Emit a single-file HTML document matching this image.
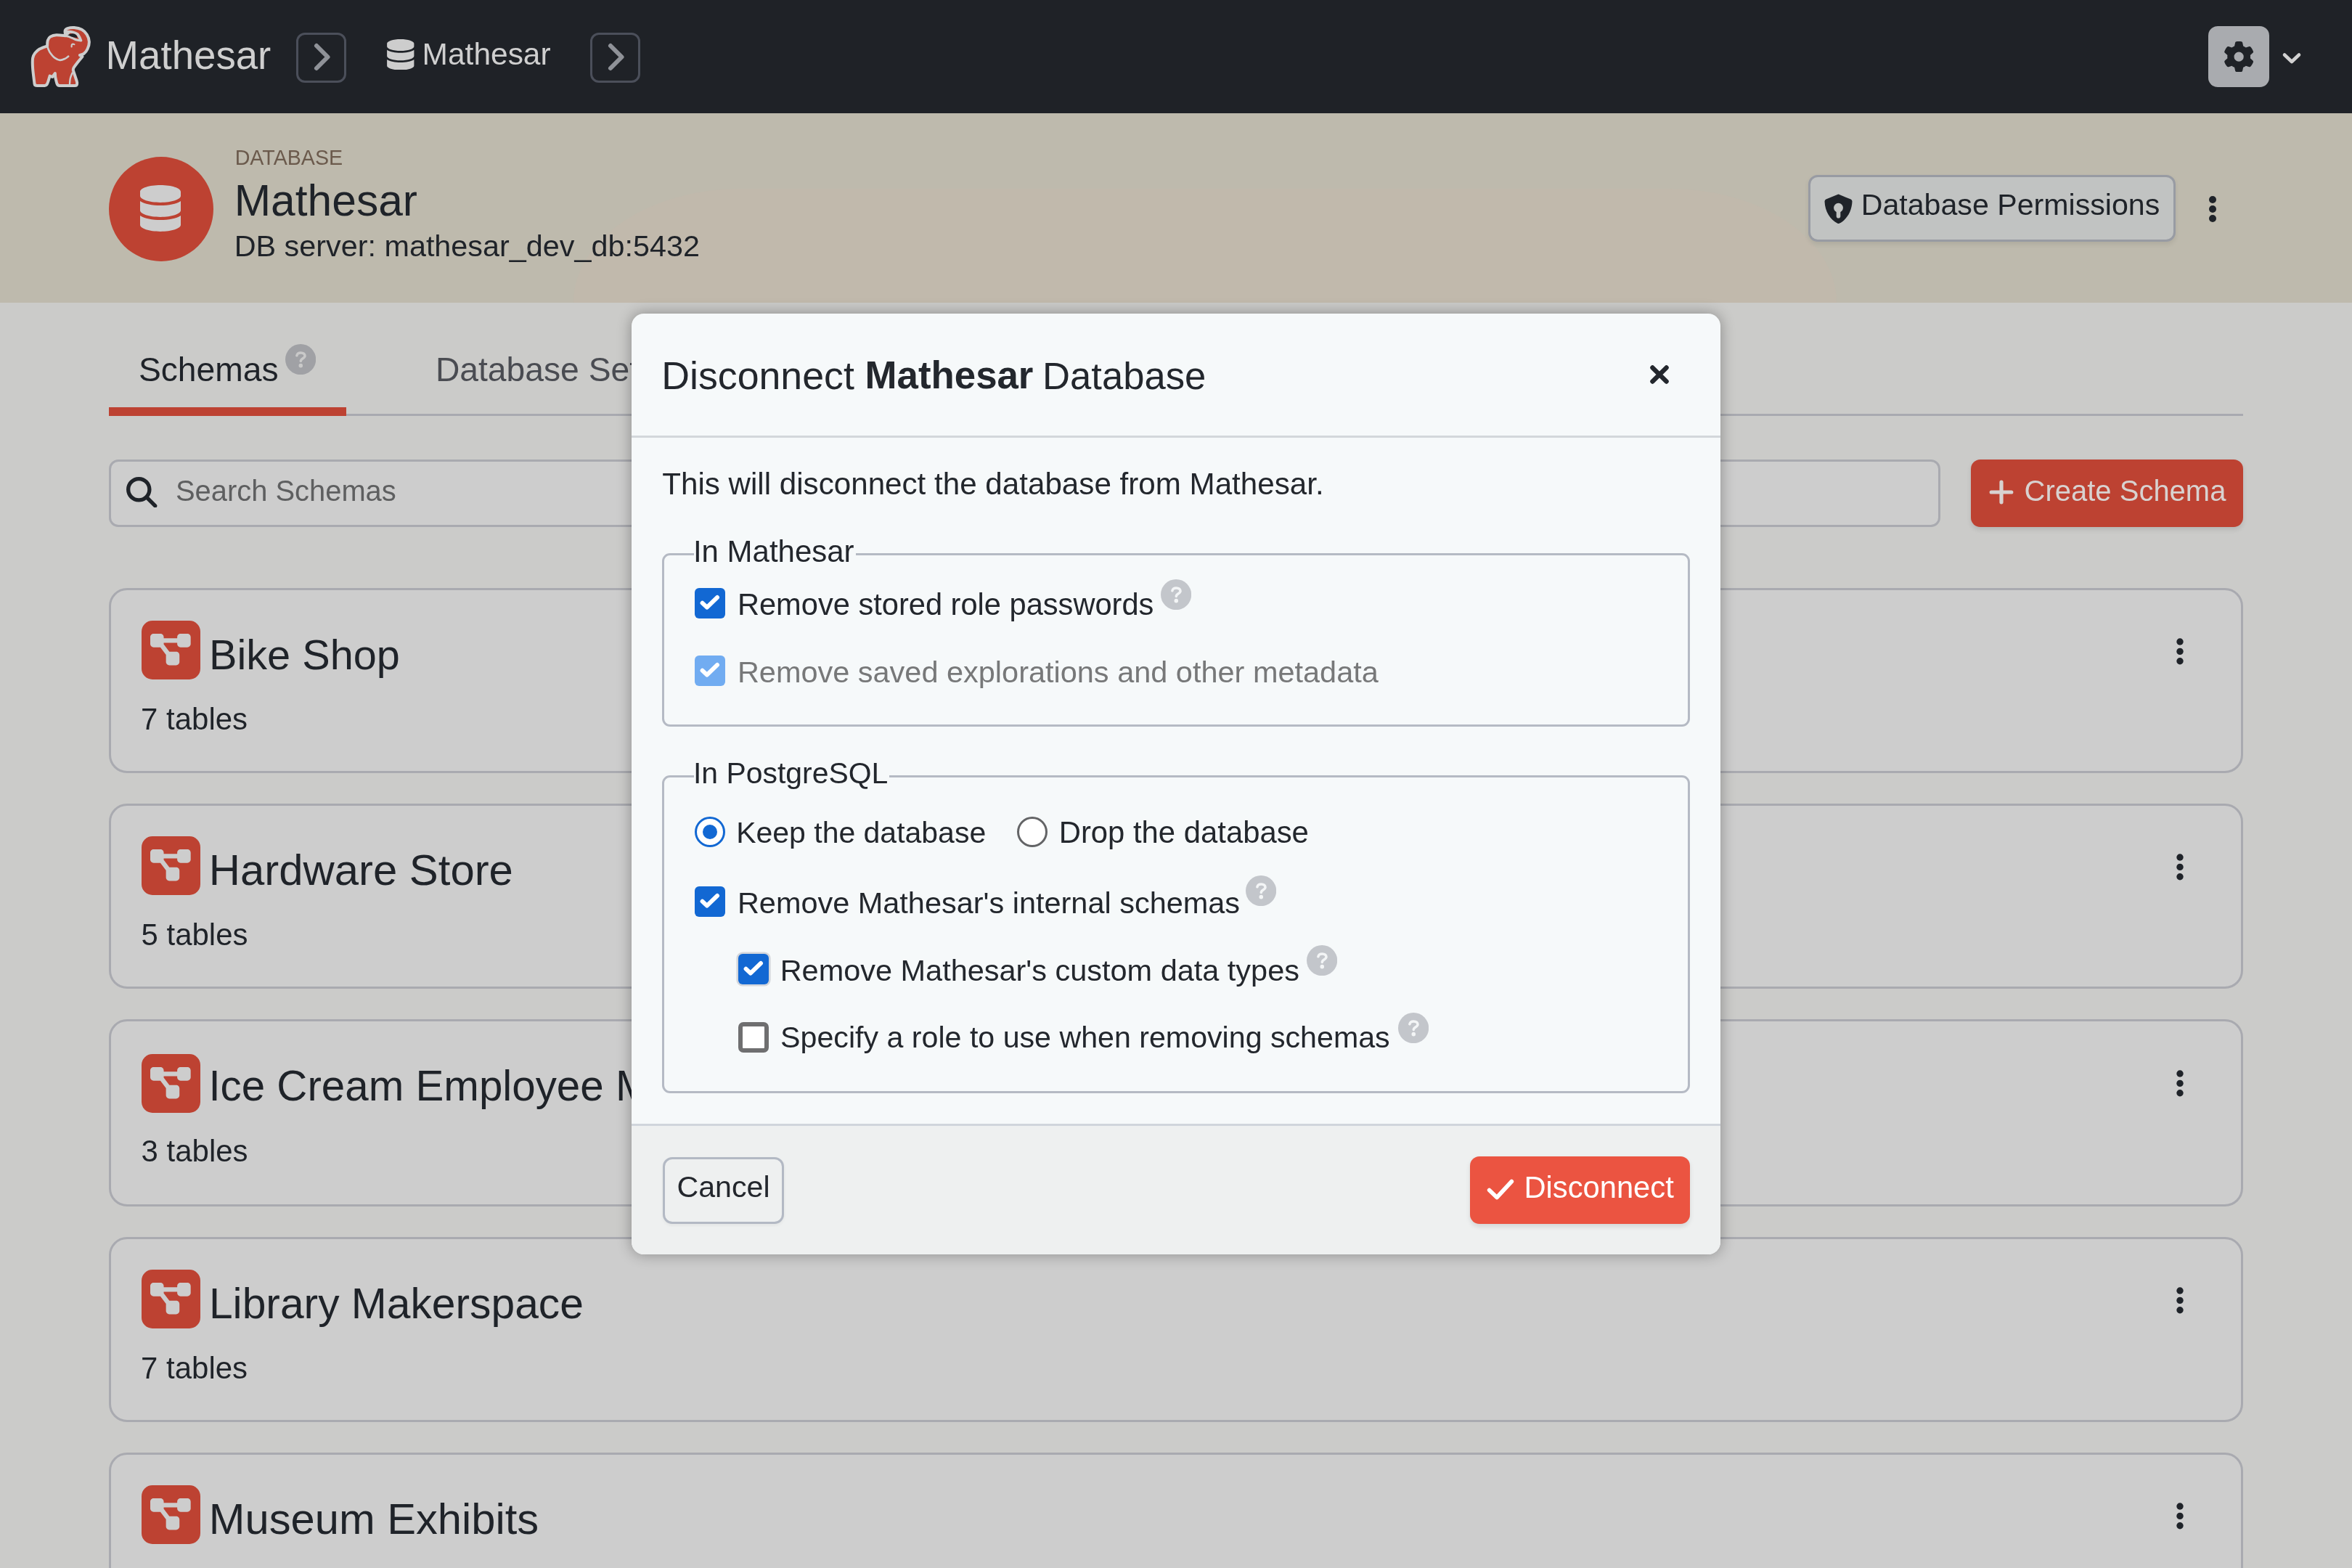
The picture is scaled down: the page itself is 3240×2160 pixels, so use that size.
<!DOCTYPE html>
<html><head><meta charset="utf-8"><title>Mathesar</title>
<style>
html,body{margin:0;padding:0;}
body{width:100vw;height:66.66667vw;overflow:hidden;position:relative;background:#cbcbc9;font-family:"Liberation Sans",sans-serif;}
.b{position:absolute;box-sizing:border-box;display:block;}
.t{position:absolute;white-space:pre;line-height:1;}
#root{position:absolute;left:0;top:0;width:100vw;height:66.66667vw;overflow:hidden;will-change:transform;transform:translateZ(0);}
</style></head><body><div id="root">
<div class="b" style="left:0;top:0;width:100vw;height:4.81482vw;background:#1f2227;"></div>
<svg class="b" style="left:0.92593vw;top:0.74075vw;width:3.70371vw;height:3.39507vw;" viewBox="30 24 120 110"><path d="M47.5 115.2C47.1 111.7 45.5 99.9 45.1 94.1C44.7 88.2 44.6 83.6 45.1 80.1C45.6 76.6 46.6 75.2 48.2 73.1C49.8 71.0 51.7 69.1 54.5 67.5C57.3 65.9 63.3 64.0 65.1 63.3C65.2 62.0 65.1 57.7 65.8 55.6C66.5 53.5 67.3 51.8 69.3 50.6C71.3 49.4 74.2 48.4 77.7 48.2C81.2 48.0 88.2 49.0 90.3 49.2C90.2 48.0 89.1 43.9 89.6 42.2C90.1 40.5 91.0 39.8 93.1 39.1C95.2 38.4 98.9 37.7 102.2 38.0C105.5 38.3 109.8 39.2 112.7 40.8C115.6 42.4 118.1 45.0 119.8 47.8C121.5 50.6 122.8 54.4 122.9 57.7C123.0 61.0 121.7 64.8 120.5 67.5C119.3 70.2 117.4 72.4 115.6 73.8C113.8 75.2 110.9 75.6 109.9 75.9L113.5 78.0C112.4 79.3 109.1 83.1 107.1 85.7C105.1 88.3 102.5 91.5 101.5 93.4C100.5 95.3 100.9 96.3 100.8 96.9C101.6 99.4 104.8 108.7 105.7 111.7C106.6 114.8 106.0 114.6 106.1 115.2Q106.39999999999999 118.19999999999999 102.8 118.0L82.0 118.0Q79.3 118.0 78.4 115.2C78.1 113.8 76.7 109.1 76.3 106.7C75.9 104.3 76.0 102.0 75.9 101.1L72.1 106.0L68.6 104.6C68.2 105.8 67.2 109.7 66.5 111.7C65.8 113.7 65.2 115.5 64.4 116.6C63.6 117.6 62.1 117.8 61.6 118.0L51.3 118.0Q47.8 118.0 47.5 115.2Z" fill="#bd4232" stroke="#cdcdcd" stroke-width="4" stroke-linejoin="round"/><path d="M90.3 49.2C91.2 49.5 94.4 50.1 96.0 50.7C97.6 51.3 98.5 51.9 100.1 52.6C101.7 53.3 103.8 54.5 105.7 55.0C107.7 55.5 110.8 55.8 111.8 55.9" fill="none" stroke="#cdcdcd" stroke-width="3.2" stroke-linecap="round"/><path d="M92.1 43.6C93.4 43.7 97.7 43.8 100.1 44.3C102.5 44.8 104.9 45.8 106.4 46.9C107.9 48.0 108.2 49.4 109.0 50.6C109.8 51.9 110.6 53.8 110.9 54.4" fill="none" stroke="#cdcdcd" stroke-width="3.8" stroke-linecap="round"/><path d="M90.3 49.2 L91.2 43.4 L97.5 44.2 L95 47.3 L97.5 51.2 Z" fill="#cdcdcd"/><path d="M93.1 48.2C94.3 47.9 98.1 46.3 100.1 46.3C102.1 46.3 103.9 47.2 105.0 48.2C106.1 49.2 106.5 51.5 106.8 52.1C105.7 51.9 102.4 51.6 100.1 51.0C97.8 50.4 94.3 48.7 93.1 48.2Z" fill="#1f2227"/><g fill="none" stroke="#cdcdcd" stroke-width="2.6" stroke-linecap="round"><path d="M65.1 63.3C65.3 64.0 65.8 65.9 66.5 67.5C67.2 69.1 67.9 71.1 69.3 73.1C70.7 75.1 72.7 77.8 74.9 79.4C77.1 81.0 80.1 82.7 82.6 82.9C85.0 83.1 87.7 81.7 89.6 80.8C91.5 79.9 93.4 78.1 94.2 77.6"/><path d="M98.6 64.5C98.6 64.0 98.6 62.1 98.9 61.5C99.2 60.9 99.8 60.6 100.4 60.6C101.0 60.6 102.1 61.1 102.4 61.2" stroke-width="2.2"/><path d="M99.6 100.5C99.1 101.8 97.4 105.5 96.8 108.0C96.2 110.5 96.1 114.2 96.0 115.5" stroke-width="2.4"/></g></svg>
<div class="t" style="left:4.49383vw;top:1.5463vw;font-size:1.68612vw;color:#cfcfcf;">Mathesar</div>
<div class="b" style="left:12.5926vw;top:1.38889vw;width:2.12963vw;height:2.12963vw;border:0.0926vw solid #4b4f5a;border-radius:0.37038vw;"></div>
<svg class="b" style="left:12.5926vw;top:1.38889vw;width:2.12963vw;height:2.12963vw;" viewBox="0 0 69 69"><path d="M28 18 L43.5 33.5 L28 49" fill="none" stroke="#8f9298" stroke-width="6" stroke-linecap="round" stroke-linejoin="round"/></svg>
<svg class="b" style="left:16.4568vw;top:1.6605vw;width:1.15741vw;height:1.31482vw;" viewBox="0 0 448 512"><path d="M448 73.143v45.714C448 159.143 347.667 192 224 192S0 159.143 0 118.857V73.143C0 32.857 100.333 0 224 0s224 32.857 224 73.143zM448 176v102.857C448 319.143 347.667 352 224 352S0 319.143 0 278.857V176c48.125 33.143 136.208 48.572 224 48.572S399.874 209.143 448 176zm0 160v102.857C448 479.143 347.667 512 224 512S0 479.143 0 438.857V336c48.125 33.143 136.208 48.572 224 48.572S399.874 369.143 448 336z" fill="#cdcdcd"/></svg>
<div class="t" style="left:17.95062vw;top:1.66667vw;font-size:1.31112vw;color:#cfcfcf;">Mathesar</div>
<div class="b" style="left:25.0926vw;top:1.38889vw;width:2.12963vw;height:2.12963vw;border:0.0926vw solid #4b4f5a;border-radius:0.37038vw;"></div>
<svg class="b" style="left:25.0926vw;top:1.38889vw;width:2.12963vw;height:2.12963vw;" viewBox="0 0 69 69"><path d="M28 18 L43.5 33.5 L28 49" fill="none" stroke="#8f9298" stroke-width="6" stroke-linecap="round" stroke-linejoin="round"/></svg>
<div class="b" style="left:93.88889vw;top:1.11112vw;width:2.5926vw;height:2.5926vw;background:#a9abaf;border-radius:0.40124vw;"></div>
<svg class="b" style="left:94.54013vw;top:1.75vw;width:1.30556vw;height:1.30556vw;" viewBox="0 0 512 512"><path d="M495.9 166.6c3.2 8.7 .5 18.4-6.4 24.6l-43.3 39.4c1.1 8.3 1.7 16.8 1.7 25.4s-.6 17.1-1.7 25.4l43.3 39.4c6.9 6.2 9.6 15.9 6.4 24.6c-4.4 11.9-9.7 23.3-15.8 34.3l-4.7 8.1c-6.6 11-14 21.400-22.1 31.200c-5.900 7.200-15.700 9.600-24.500 6.800l-55.700-17.700c-13.400 10.300-28.200 18.900-44 25.400l-12.500 57.100c-2 9.100-9 16.300-18.200 17.800c-13.800 2.300-28 3.500-42.500 3.500s-28.700-1.200-42.500-3.500c-9.200-1.500-16.200-8.700-18.200-17.800l-12.500-57.100c-15.800-6.500-30.600-15.100-44-25.400L83.100 425.900c-8.800 2.800-18.600 .3-24.500-6.800c-8.100-9.800-15.500-20.200-22.100-31.200l-4.700-8.100c-6.100-11-11.400-22.400-15.800-34.300c-3.200-8.700-.5-18.400 6.400-24.600l43.300-39.400C64.600 273.100 64 264.600 64 256s.6-17.100 1.700-25.400L22.400 191.200c-6.900-6.200-9.600-15.900-6.400-24.600c4.400-11.900 9.700-23.300 15.800-34.300l4.700-8.100c6.600-11 14-21.400 22.100-31.200c5.900-7.200 15.700-9.600 24.500-6.800l55.700 17.700c13.400-10.300 28.200-18.900 44-25.400l12.500-57.100c2-9.100 9-16.300 18.200-17.800C227.300 1.200 241.500 0 256 0s28.700 1.200 42.500 3.500c9.200 1.500 16.200 8.700 18.200 17.800l12.500 57.100c15.800 6.500 30.600 15.100 44 25.400l55.700-17.700c8.800-2.800 18.600-.3 24.500 6.800c8.100 9.800 15.500 20.200 22.100 31.200l4.700 8.100c6.100 11 11.400 22.400 15.800 34.300zM256 336a80 80 0 1 0 0-160 80 80 0 1 0 0 160z" fill="#1f2227"/></svg>
<svg class="b" style="left:96.91359vw;top:2.09877vw;width:1.04939vw;height:0.74075vw;" viewBox="0 0 34 24"><path d="M7 7.5 L17 17 L27 7.5" fill="none" stroke="#d2d2d2" stroke-width="4.6" stroke-linecap="round" stroke-linejoin="round"/></svg>
<div class="b" style="left:0;top:4.81482vw;width:100vw;height:8.05556vw;background:#bebaad;overflow:hidden;"><div class="b" style="left:24.38272vw;top:3.20988vw;width:53.70371vw;height:5.24692vw;background:#c1b9ac;border-radius:7.09877vw 7.09877vw 0 0 / 4.84568vw 4.84568vw 0 0;"></div></div>
<div class="b" style="left:4.62963vw;top:6.66667vw;width:4.44445vw;height:4.44445vw;background:#bd4232;border-radius:50%;"></div>
<svg class="b" style="left:5.94136vw;top:7.85494vw;width:1.7284vw;height:1.97531vw;" viewBox="0 0 448 512"><path d="M448 73.143v45.714C448 159.143 347.667 192 224 192S0 159.143 0 118.857V73.143C0 32.857 100.333 0 224 0s224 32.857 224 73.143zM448 176v102.857C448 319.143 347.667 352 224 352S0 319.143 0 278.857V176c48.125 33.143 136.208 48.572 224 48.572S399.874 209.143 448 176zm0 160v102.857C448 479.143 347.667 512 224 512S0 479.143 0 438.857V336c48.125 33.143 136.208 48.572 224 48.572S399.874 369.143 448 336z" fill="#cdcdcd"/></svg>
<div class="t" style="left:9.99075vw;top:6.2747vw;font-size:0.88365vw;color:#6b5a4c;">DATABASE</div>
<div class="t" style="left:9.95988vw;top:7.60186vw;font-size:1.86821vw;color:#1f2329;">Mathesar</div>
<div class="t" style="left:9.95988vw;top:9.84568vw;font-size:1.27624vw;color:#1f2329;">DB server: mathesar_dev_db:5432</div>
<div class="b" style="left:76.86729vw;top:7.42284vw;width:15.63272vw;height:2.83951vw;background:#c1c3c2;border:0.0926vw solid #989ba3;border-radius:0.40124vw;box-shadow:0 0.0926vw 0.18519vw rgba(0,0,0,0.08);"></div>
<svg class="b" style="left:77.5463vw;top:8.24075vw;width:1.20371vw;height:1.28087vw;" viewBox="0 0 39 41.5"><path d="M19.5 0.6 L36.6 7.6 Q38.6 8.5 38.5 10.6 C38 24 31 36 20.6 40.8 Q19.5 41.3 18.4 40.8 C8 36 1 24 0.5 10.6 Q0.4 8.5 2.4 7.6 Z" fill="#1f2329"/><circle cx="19.5" cy="19.2" r="6.4" fill="#c1c3c2"/><rect x="16.7" y="19" width="5.6" height="14.5" rx="2.8" fill="#c1c3c2"/></svg>
<div class="t" style="left:79.12655vw;top:8.0926vw;font-size:1.27007vw;color:#1f2329;">Database Permissions</div>
<svg class="b" style="left:93.82717vw;top:8.24075vw;width:0.49383vw;height:1.2963vw;" viewBox="0 0 16 42"><circle cx="8" cy="8" r="5" fill="#1f2329"/><circle cx="8" cy="21" r="5" fill="#1f2329"/><circle cx="8" cy="34" r="5" fill="#1f2329"/></svg>
<div class="t" style="left:5.89198vw;top:15.01235vw;font-size:1.42717vw;color:#1f2329;">Schemas</div>
<svg class="b" style="left:12.12963vw;top:14.62963vw;width:1.30247vw;height:1.30247vw;" viewBox="0 0 42 42"><circle cx="21" cy="21" r="21" fill="#a0a1a5"/><path d="M15.8 15.7 C16.4 12.9 18.8 11.9 21.4 11.9 C24.8 11.9 26.9 13.8 26.9 16.2 C26.9 19.7 21.2 19.7 21.2 23.5" fill="none" stroke="#c9c9c9" stroke-width="3.5" stroke-linecap="round"/><circle cx="21.2" cy="29.5" r="2.75" fill="#c9c9c9"/></svg>
<div class="t" style="left:18.51544vw;top:15.01235vw;font-size:1.42717vw;color:#4a4c52;">Database Settings</div>
<div class="b" style="left:4.62963vw;top:17.5926vw;width:90.74075vw;height:0.0926vw;background:#a9aab0;"></div>
<div class="b" style="left:4.62963vw;top:17.31482vw;width:10.0926vw;height:0.37038vw;background:#bd4232;"></div>
<div class="b" style="left:4.62963vw;top:19.53704vw;width:77.85494vw;height:2.87038vw;background:#cdcdcd;border:0.0926vw solid #a9aab0;border-radius:0.40124vw;"></div>
<svg class="b" style="left:5.37038vw;top:20.26235vw;width:1.31173vw;height:1.31173vw;" viewBox="0 0 512 512"><path d="M416 208c0 45.900-14.900 88.300-40 122.700L502.600 457.400c12.500 12.500 12.500 32.800 0 45.300s-32.800 12.500-45.300 0L330.700 376c-34.400 25.200-76.800 40-122.700 40C93.100 416 0 322.900 0 208S93.100 0 208 0S416 93.100 416 208zM208 352a144 144 0 1 0 0-288 144 144 0 1 0 0 288z" fill="#1f2329"/></svg>
<div class="t" style="left:7.46605vw;top:20.26235vw;font-size:1.2321vw;color:#5e5f60;">Search Schemas</div>
<div class="b" style="left:83.7963vw;top:19.53704vw;width:11.57408vw;height:2.87038vw;background:#bd4232;border-radius:0.40124vw;box-shadow:0 0.0926vw 0.18519vw rgba(0,0,0,0.10);"></div>
<svg class="b" style="left:84.47531vw;top:20.30865vw;width:1.23457vw;height:1.23457vw;" viewBox="0 0 40 40"><path d="M20 6.2 V33.8 M6.2 20 H33.8" fill="none" stroke="#d8d2d0" stroke-width="5.2" stroke-linecap="round"/></svg>
<div class="t" style="left:86.06791vw;top:20.25309vw;font-size:1.23426vw;color:#d8d2d0;">Create Schema</div>
<div class="b" style="left:4.62963vw;top:25vw;width:90.74075vw;height:7.87038vw;background:#cdcdcd;border:0.0926vw solid #a9aab0;border-radius:0.77161vw;"></div>
<div class="b" style="left:6.02778vw;top:26.38889vw;width:2.5vw;height:2.5vw;background:#bd4232;border-radius:0.46297vw;"></div>
<svg class="b" style="left:6.38581vw;top:26.85494vw;width:1.71914vw;height:1.52778vw;" viewBox="0 0 576 512"><path d="M0 80C0 53.500 21.500 32 48 32h96c26.500 0 48 21.500 48 48V96H384V80c0-26.500 21.500-48 48-48h96c26.500 0 48 21.500 48 48v96c0 26.500-21.500 48-48 48H432c-26.500 0-48-21.500-48-48V160H192v16c0 1.700-.1 3.400-.3 5L272 288h96c26.500 0 48 21.500 48 48v96c0 26.500-21.500 48-48 48H272c-26.500 0-48-21.500-48-48V336c0-1.700 .1-3.400 .3-5L144 224H48c-26.500 0-48-21.500-48-48V80z" fill="#cdcdcd"/></svg>
<div class="t" style="left:8.88889vw;top:26.95988vw;font-size:1.77994vw;color:#1f2329;">Bike Shop</div>
<div class="t" style="left:5.99075vw;top:29.93828vw;font-size:1.29507vw;color:#1f2329;">7 tables</div>
<svg class="b" style="left:92.43828vw;top:27.0247vw;width:0.49383vw;height:1.32099vw;" viewBox="0 0 16 42.8"><circle cx="8" cy="8.0" r="4.7" fill="#1f2329"/><circle cx="8" cy="21.4" r="4.7" fill="#1f2329"/><circle cx="8" cy="34.8" r="4.7" fill="#1f2329"/></svg>
<div class="b" style="left:4.62963vw;top:34.16667vw;width:90.74075vw;height:7.87038vw;background:#cdcdcd;border:0.0926vw solid #a9aab0;border-radius:0.77161vw;"></div>
<div class="b" style="left:6.02778vw;top:35.55556vw;width:2.5vw;height:2.5vw;background:#bd4232;border-radius:0.46297vw;"></div>
<svg class="b" style="left:6.38581vw;top:36.02161vw;width:1.71914vw;height:1.52778vw;" viewBox="0 0 576 512"><path d="M0 80C0 53.500 21.500 32 48 32h96c26.500 0 48 21.500 48 48V96H384V80c0-26.500 21.500-48 48-48h96c26.500 0 48 21.500 48 48v96c0 26.500-21.500 48-48 48H432c-26.500 0-48-21.500-48-48V160H192v16c0 1.700-.1 3.400-.3 5L272 288h96c26.500 0 48 21.500 48 48v96c0 26.500-21.500 48-48 48H272c-26.500 0-48-21.500-48-48V336c0-1.700 .1-3.400 .3-5L144 224H48c-26.500 0-48-21.500-48-48V80z" fill="#cdcdcd"/></svg>
<div class="t" style="left:8.88272vw;top:36.06791vw;font-size:1.84723vw;color:#1f2329;">Hardware Store</div>
<div class="t" style="left:6.00309vw;top:39.10494vw;font-size:1.29507vw;color:#1f2329;">5 tables</div>
<svg class="b" style="left:92.43828vw;top:36.19136vw;width:0.49383vw;height:1.32099vw;" viewBox="0 0 16 42.8"><circle cx="8" cy="8.0" r="4.7" fill="#1f2329"/><circle cx="8" cy="21.4" r="4.7" fill="#1f2329"/><circle cx="8" cy="34.8" r="4.7" fill="#1f2329"/></svg>
<div class="b" style="left:4.62963vw;top:43.33334vw;width:90.74075vw;height:7.96297vw;background:#cdcdcd;border:0.0926vw solid #a9aab0;border-radius:0.77161vw;"></div>
<div class="b" style="left:6.02778vw;top:44.81482vw;width:2.5vw;height:2.5vw;background:#bd4232;border-radius:0.46297vw;"></div>
<svg class="b" style="left:6.38581vw;top:45.28087vw;width:1.71914vw;height:1.52778vw;" viewBox="0 0 576 512"><path d="M0 80C0 53.500 21.500 32 48 32h96c26.500 0 48 21.500 48 48V96H384V80c0-26.500 21.500-48 48-48h96c26.500 0 48 21.500 48 48v96c0 26.500-21.500 48-48 48H432c-26.500 0-48-21.500-48-48V160H192v16c0 1.700-.1 3.400-.3 5L272 288h96c26.500 0 48 21.500 48 48v96c0 26.500-21.500 48-48 48H272c-26.500 0-48-21.500-48-48V336c0-1.700 .1-3.400 .3-5L144 224H48c-26.500 0-48-21.500-48-48V80z" fill="#cdcdcd"/></svg>
<div class="t" style="left:8.87038vw;top:45.2747vw;font-size:1.79939vw;color:#1f2329;">Ice Cream Employee Management</div>
<div class="t" style="left:6.00618vw;top:48.30247vw;font-size:1.29507vw;color:#1f2329;">3 tables</div>
<svg class="b" style="left:92.43828vw;top:45.40433vw;width:0.49383vw;height:1.32099vw;" viewBox="0 0 16 42.8"><circle cx="8" cy="8.0" r="4.7" fill="#1f2329"/><circle cx="8" cy="21.4" r="4.7" fill="#1f2329"/><circle cx="8" cy="34.8" r="4.7" fill="#1f2329"/></svg>
<div class="b" style="left:4.62963vw;top:52.5926vw;width:90.74075vw;height:7.87038vw;background:#cdcdcd;border:0.0926vw solid #a9aab0;border-radius:0.77161vw;"></div>
<div class="b" style="left:6.02778vw;top:53.98149vw;width:2.5vw;height:2.5vw;background:#bd4232;border-radius:0.46297vw;"></div>
<svg class="b" style="left:6.38581vw;top:54.44754vw;width:1.71914vw;height:1.52778vw;" viewBox="0 0 576 512"><path d="M0 80C0 53.500 21.500 32 48 32h96c26.500 0 48 21.500 48 48V96H384V80c0-26.500 21.500-48 48-48h96c26.500 0 48 21.500 48 48v96c0 26.500-21.500 48-48 48H432c-26.500 0-48-21.500-48-48V160H192v16c0 1.700-.1 3.400-.3 5L272 288h96c26.500 0 48 21.500 48 48v96c0 26.500-21.500 48-48 48H272c-26.500 0-48-21.500-48-48V336c0-1.700 .1-3.400 .3-5L144 224H48c-26.500 0-48-21.500-48-48V80z" fill="#cdcdcd"/></svg>
<div class="t" style="left:8.88581vw;top:54.52161vw;font-size:1.8142vw;color:#1f2329;">Library Makerspace</div>
<div class="t" style="left:5.99075vw;top:57.53087vw;font-size:1.29507vw;color:#1f2329;">7 tables</div>
<svg class="b" style="left:92.43828vw;top:54.61729vw;width:0.49383vw;height:1.32099vw;" viewBox="0 0 16 42.8"><circle cx="8" cy="8.0" r="4.7" fill="#1f2329"/><circle cx="8" cy="21.4" r="4.7" fill="#1f2329"/><circle cx="8" cy="34.8" r="4.7" fill="#1f2329"/></svg>
<div class="b" style="left:4.62963vw;top:61.75926vw;width:90.74075vw;height:7.87038vw;background:#cdcdcd;border:0.0926vw solid #a9aab0;border-radius:0.77161vw;"></div>
<div class="b" style="left:6.02778vw;top:63.14815vw;width:2.5vw;height:2.5vw;background:#bd4232;border-radius:0.46297vw;"></div>
<svg class="b" style="left:6.38581vw;top:63.6142vw;width:1.71914vw;height:1.52778vw;" viewBox="0 0 576 512"><path d="M0 80C0 53.500 21.500 32 48 32h96c26.500 0 48 21.500 48 48V96H384V80c0-26.500 21.500-48 48-48h96c26.500 0 48 21.500 48 48v96c0 26.500-21.500 48-48 48H432c-26.500 0-48-21.500-48-48V160H192v16c0 1.700-.1 3.400-.3 5L272 288h96c26.500 0 48 21.500 48 48v96c0 26.500-21.500 48-48 48H272c-26.500 0-48-21.500-48-48V336c0-1.700 .1-3.400 .3-5L144 224H48c-26.500 0-48-21.500-48-48V80z" fill="#cdcdcd"/></svg>
<div class="t" style="left:8.88272vw;top:63.66667vw;font-size:1.84198vw;color:#1f2329;">Museum Exhibits</div>
<div class="t" style="left:6.02778vw;top:66.69754vw;font-size:1.29507vw;color:#1f2329;">4 tables</div>
<svg class="b" style="left:92.43828vw;top:63.78396vw;width:0.49383vw;height:1.32099vw;" viewBox="0 0 16 42.8"><circle cx="8" cy="8.0" r="4.7" fill="#1f2329"/><circle cx="8" cy="21.4" r="4.7" fill="#1f2329"/><circle cx="8" cy="34.8" r="4.7" fill="#1f2329"/></svg>
<div class="b" style="left:26.85186vw;top:13.33334vw;width:46.2963vw;height:40vw;background:#f6f9fa;border-radius:0.5247vw;box-shadow:0 0 0.61729vw 0 rgba(0,0,0,0.33);overflow:hidden;"><div class="b" style="left:0;top:5.18519vw;width:46.2963vw;height:0.0926vw;background:#d3d7db;"></div><div class="b" style="left:0;top:34.44445vw;width:46.2963vw;height:5.55556vw;background:#eef0f0;"></div><div class="b" style="left:0;top:34.44445vw;width:46.2963vw;height:0.0926vw;background:#d0d5dc;"></div></div>
<div class="t" style="left:28.12655vw;top:15.14198vw;font-size:1.6568vw;color:#23272d;">Disconnect</div>
<div class="t" style="left:36.77778vw;top:15.16359vw;font-size:1.62963vw;color:#23272d; font-weight:700;">Mathesar</div>
<div class="t" style="left:44.32408vw;top:15.16976vw;font-size:1.62346vw;color:#23272d;">Database</div>
<svg class="b" style="left:69.93828vw;top:15.30865vw;width:1.23457vw;height:1.23457vw;" viewBox="0 0 40 40"><path d="M10.4 10.4 L29.6 29.6 M29.6 10.4 L10.4 29.6" fill="none" stroke="#23272d" stroke-width="6.3" stroke-linecap="round"/></svg>
<div class="t" style="left:28.15433vw;top:19.92593vw;font-size:1.30124vw;color:#23272d;">This will disconnect the database from Mathesar.</div>
<div class="b" style="left:28.14815vw;top:23.51852vw;width:43.70371vw;height:7.37655vw;border:0.0926vw solid #b5bac4;border-radius:0.33951vw;"></div>
<div class="b" style="left:29.50618vw;top:23.4568vw;width:6.88272vw;height:0.24692vw;background:#f6f9fa;"></div>
<div class="t" style="left:29.47223vw;top:22.79321vw;font-size:1.29599vw;color:#23272d;">In Mathesar</div>
<div class="b" style="left:28.14815vw;top:32.96297vw;width:43.70371vw;height:13.51852vw;border:0.0926vw solid #b5bac4;border-radius:0.33951vw;"></div>
<div class="b" style="left:29.50618vw;top:32.90124vw;width:8.30247vw;height:0.24692vw;background:#f6f9fa;"></div>
<div class="t" style="left:29.47531vw;top:32.26544vw;font-size:1.26235vw;color:#23272d;">In PostgreSQL</div>
<div class="b" style="left:29.53704vw;top:25vw;width:1.2963vw;height:1.2963vw;background:#1268d3;border-radius:0.18519vw;"></div>
<svg class="b" style="left:29.53704vw;top:25vw;width:1.2963vw;height:1.2963vw;" viewBox="0 0 42 42"><path d="M10.5 20.7 L16.9 26.7 L31.1 12.9" fill="none" stroke="#fff" stroke-width="5.8" stroke-linecap="round" stroke-linejoin="round"/></svg>
<div class="t" style="left:31.35494vw;top:25.05556vw;font-size:1.28426vw;color:#23272d;">Remove stored role passwords</div>
<svg class="b" style="left:49.34568vw;top:24.61729vw;width:1.30247vw;height:1.30247vw;" viewBox="0 0 42 42"><circle cx="21" cy="21" r="21" fill="#c3c6cb"/><path d="M15.8 15.7 C16.4 12.9 18.8 11.9 21.4 11.9 C24.8 11.9 26.9 13.8 26.9 16.2 C26.9 19.7 21.2 19.7 21.2 23.5" fill="none" stroke="#f3f5f6" stroke-width="3.5" stroke-linecap="round"/><circle cx="21.2" cy="29.5" r="2.75" fill="#f3f5f6"/></svg>
<div class="b" style="left:29.53704vw;top:27.87038vw;width:1.2963vw;height:1.2963vw;background:#71acf1;border-radius:0.18519vw;"></div>
<svg class="b" style="left:29.53704vw;top:27.87038vw;width:1.2963vw;height:1.2963vw;" viewBox="0 0 42 42"><path d="M10.5 20.7 L16.9 26.7 L31.1 12.9" fill="none" stroke="#fff" stroke-width="5.8" stroke-linecap="round" stroke-linejoin="round"/></svg>
<div class="t" style="left:31.35494vw;top:27.91976vw;font-size:1.28025vw;color:#777879;">Remove saved explorations and other metadata</div>
<div class="b" style="left:29.53704vw;top:34.72223vw;width:1.2963vw;height:1.2963vw;background:#fff;border:0.0926vw solid #1268d3;border-radius:50%;"></div>
<div class="b" style="left:29.87655vw;top:35.06173vw;width:0.61729vw;height:0.61729vw;background:#1268d3;border-radius:50%;"></div>
<div class="t" style="left:31.30247vw;top:34.76852vw;font-size:1.26482vw;color:#23272d;">Keep the database</div>
<div class="b" style="left:43.24075vw;top:34.72223vw;width:1.2963vw;height:1.2963vw;background:#fff;border:0.0926vw solid #636466;border-radius:50%;"></div>
<div class="t" style="left:45.02161vw;top:34.74692vw;font-size:1.29105vw;color:#23272d;">Drop the database</div>
<div class="b" style="left:29.53704vw;top:37.68519vw;width:1.2963vw;height:1.2963vw;background:#1268d3;border-radius:0.18519vw;"></div>
<svg class="b" style="left:29.53704vw;top:37.68519vw;width:1.2963vw;height:1.2963vw;" viewBox="0 0 42 42"><path d="M10.5 20.7 L16.9 26.7 L31.1 12.9" fill="none" stroke="#fff" stroke-width="5.8" stroke-linecap="round" stroke-linejoin="round"/></svg>
<div class="t" style="left:31.35494vw;top:37.74383vw;font-size:1.27963vw;color:#23272d;">Remove Mathesar's internal schemas</div>
<svg class="b" style="left:52.96297vw;top:37.22223vw;width:1.30247vw;height:1.30247vw;" viewBox="0 0 42 42"><circle cx="21" cy="21" r="21" fill="#c3c6cb"/><path d="M15.8 15.7 C16.4 12.9 18.8 11.9 21.4 11.9 C24.8 11.9 26.9 13.8 26.9 16.2 C26.9 19.7 21.2 19.7 21.2 23.5" fill="none" stroke="#f3f5f6" stroke-width="3.5" stroke-linecap="round"/><circle cx="21.2" cy="29.5" r="2.75" fill="#f3f5f6"/></svg>
<div class="b" style="left:31.38889vw;top:40.55556vw;width:1.2963vw;height:1.2963vw;background:#1268d3;border-radius:0.18519vw;box-shadow:0 0 0 0.08025vw #d3d6db;"></div>
<svg class="b" style="left:31.38889vw;top:40.55556vw;width:1.2963vw;height:1.2963vw;" viewBox="0 0 42 42"><path d="M10.5 20.7 L16.9 26.7 L31.1 12.9" fill="none" stroke="#fff" stroke-width="5.8" stroke-linecap="round" stroke-linejoin="round"/></svg>
<div class="t" style="left:33.16976vw;top:40.6142vw;font-size:1.27963vw;color:#23272d;">Remove Mathesar's custom data types</div>
<svg class="b" style="left:55.55556vw;top:40.18519vw;width:1.30247vw;height:1.30247vw;" viewBox="0 0 42 42"><circle cx="21" cy="21" r="21" fill="#c3c6cb"/><path d="M15.8 15.7 C16.4 12.9 18.8 11.9 21.4 11.9 C24.8 11.9 26.9 13.8 26.9 16.2 C26.9 19.7 21.2 19.7 21.2 23.5" fill="none" stroke="#f3f5f6" stroke-width="3.5" stroke-linecap="round"/><circle cx="21.2" cy="29.5" r="2.75" fill="#f3f5f6"/></svg>
<div class="b" style="left:31.38889vw;top:43.44136vw;width:1.2963vw;height:1.2963vw;background:#fff;border:0.18519vw solid #6f6f70;border-radius:0.21605vw;"></div>
<div class="t" style="left:33.1821vw;top:43.49075vw;font-size:1.27068vw;color:#23272d;">Specify a role to use when removing schemas</div>
<svg class="b" style="left:59.44445vw;top:43.05556vw;width:1.30247vw;height:1.30247vw;" viewBox="0 0 42 42"><circle cx="21" cy="21" r="21" fill="#c3c6cb"/><path d="M15.8 15.7 C16.4 12.9 18.8 11.9 21.4 11.9 C24.8 11.9 26.9 13.8 26.9 16.2 C26.9 19.7 21.2 19.7 21.2 23.5" fill="none" stroke="#f3f5f6" stroke-width="3.5" stroke-linecap="round"/><circle cx="21.2" cy="29.5" r="2.75" fill="#f3f5f6"/></svg>
<div class="b" style="left:28.16359vw;top:49.1821vw;width:5.15433vw;height:2.83951vw;background:#eef0f0;border:0.0926vw solid #b3b9c4;border-radius:0.40124vw;box-shadow:0 0.06173vw 0.12346vw rgba(0,0,0,0.05);"></div>
<div class="t" style="left:28.78087vw;top:49.8426vw;font-size:1.27068vw;color:#23272d;">Cancel</div>
<div class="b" style="left:62.5vw;top:49.16667vw;width:9.35186vw;height:2.87038vw;background:#eb5441;border-radius:0.40124vw;box-shadow:0 0.0926vw 0.18519vw rgba(0,0,0,0.10);"></div>
<svg class="b" style="left:63.08642vw;top:49.87655vw;width:1.41976vw;height:1.35803vw;" viewBox="0 0 46 44"><path d="M7.6 23.5 L18 33.5 L38.4 11.5" fill="none" stroke="#fff" stroke-width="5.6" stroke-linecap="round" stroke-linejoin="round"/></svg>
<div class="t" style="left:64.7963vw;top:49.84568vw;font-size:1.28797vw;color:#fff;">Disconnect</div>
</div></body></html>
